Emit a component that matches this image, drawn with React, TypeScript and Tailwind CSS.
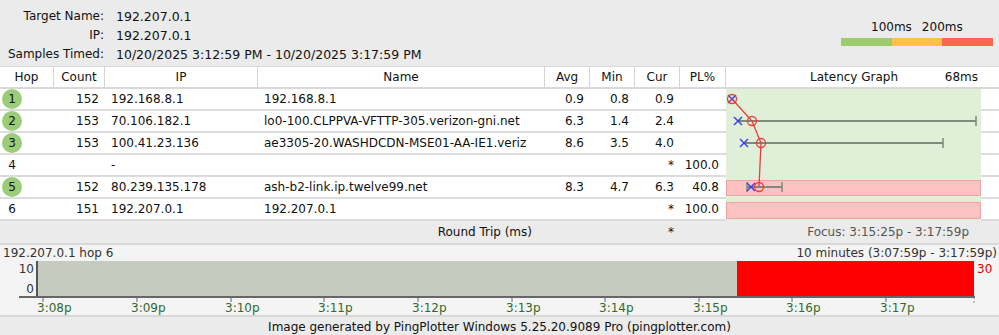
import React from 'react';

const font = { fontFamily: '"DejaVu Sans", Verdana, sans-serif' };

type Hop = {
  hop: number;
  ok: boolean;
  count: string;
  ip: string;
  name: string;
  avg: string;
  min: string;
  cur: string;
  pl: string;
};

const hops: Hop[] = [
  { hop: 1, ok: true, count: '152', ip: '192.168.8.1', name: '192.168.8.1', avg: '0.9', min: '0.8', cur: '0.9', pl: '' },
  { hop: 2, ok: true, count: '153', ip: '70.106.182.1', name: 'lo0-100.CLPPVA-VFTTP-305.verizon-gni.net', avg: '6.3', min: '1.4', cur: '2.4', pl: '' },
  { hop: 3, ok: true, count: '153', ip: '100.41.23.136', name: 'ae3305-20.WASHDCDN-MSE01-AA-IE1.veriz', avg: '8.6', min: '3.5', cur: '4.0', pl: '' },
  { hop: 4, ok: false, count: '', ip: '-', name: '', avg: '', min: '', cur: '*', pl: '100.0' },
  { hop: 5, ok: true, count: '152', ip: '80.239.135.178', name: 'ash-b2-link.ip.twelve99.net', avg: '8.3', min: '4.7', cur: '6.3', pl: '40.8' },
  { hop: 6, ok: false, count: '151', ip: '192.207.0.1', name: '192.207.0.1', avg: '', min: '', cur: '*', pl: '100.0' },
];

const ticks = [
  { x: 43, label: '3:08p' },
  { x: 137, label: '3:09p' },
  { x: 231, label: '3:10p' },
  { x: 324, label: '3:11p' },
  { x: 418, label: '3:12p' },
  { x: 512, label: '3:13p' },
  { x: 605, label: '3:14p' },
  { x: 699, label: '3:15p' },
  { x: 792, label: '3:16p' },
  { x: 886, label: '3:17p' },
];

function LatencyGraph() {
  const rows = [0, 1, 2, 3, 4, 5];
  return (
    <svg width="273" height="132" className="block">
      <rect x="0" y="0" width="255" height="132" fill="#e0efd7" />
      {rows.map((r) => (
        <rect key={r} x="255" y={r * 22 + 20} width="18" height="2" fill="#dcdcdc" />
      ))}
      <rect x="0.5" y="91.5" width="254" height="15" fill="#ffc2c2" stroke="#eea4a4" />
      <rect x="0.5" y="113.5" width="254" height="16" fill="#ffc2c2" stroke="#eea4a4" />

      {/* min..max bars */}
      <g stroke="#7d8a7a" strokeWidth="2">
        <line x1="12" y1="32" x2="250" y2="32" />
        <line x1="250" y1="27" x2="250" y2="37" strokeWidth="1.5" />
        <line x1="18" y1="54" x2="217" y2="54" />
        <line x1="217" y1="49" x2="217" y2="59" strokeWidth="1.5" />
        <line x1="21" y1="98" x2="56" y2="98" />
        <line x1="21" y1="93" x2="21" y2="103" strokeWidth="1.5" />
        <line x1="56" y1="93" x2="56" y2="103" strokeWidth="1.5" />
      </g>

      {/* min marks */}
      <g stroke="#3b3fe6" strokeWidth="1.5">
        {[
          [6, 10],
          [12, 32],
          [18, 54],
          [25, 98],
        ].map(([x, y]) => (
          <g key={`${x}-${y}`}>
            <line x1={x - 4} y1={y - 4} x2={x + 4} y2={y + 4} />
            <line x1={x - 4} y1={y + 4} x2={x + 4} y2={y - 4} />
          </g>
        ))}
      </g>

      {/* avg line */}
      <polyline points="6,10 26,32 35,54 33,98" fill="none" stroke="#ee3b3b" strokeWidth="1.3" />
      <g stroke="#ee3b3b" strokeWidth="1.3" fill="none">
        <circle cx="6" cy="10" r="4.5" />
        <circle cx="26" cy="32" r="4.5" />
        <circle cx="35" cy="54" r="4.5" />
        <circle cx="33" cy="98" r="4.5" />
      </g>
    </svg>
  );
}

function TimelineChart() {
  return (
    <svg width="999" height="54" className="block" style={font}>
      <rect x="38" y="0" width="699" height="36" fill="#c6cbc0" />
      <rect x="737" y="0" width="237" height="36" fill="#ff0000" />
      <line x1="37" y1="0" x2="37" y2="37" stroke="#555" strokeWidth="2" />
      <line x1="19" y1="36" x2="975" y2="36" stroke="#666" strokeWidth="2" />
      <text x="34" y="12" fontSize="12" textAnchor="end" fill="#333">10</text>
      <text x="34" y="32" fontSize="12" textAnchor="end" fill="#333">0</text>
      <text x="977" y="12" fontSize="12" fill="#dd0000">30</text>
      {ticks.map((t) => (
        <g key={t.label}>
          <line x1={t.x} y1="36" x2={t.x} y2="41" stroke="#666" strokeWidth="1" />
          <text x={t.x - 6} y="51" fontSize="12" fill="#2e6b2e">
            {t.label}
          </text>
        </g>
      ))}
      <line x1="974" y1="36" x2="974" y2="44" stroke="#888" strokeWidth="1" strokeDasharray="2 2" />
    </svg>
  );
}

export default function App() {
  return (
    <div className="w-[999px] h-[335px] overflow-hidden bg-white text-[12px] text-[#111]" style={font}>
      {/* target info */}
      <div className="flex h-[66px] justify-between bg-[#ebebeb]">
        <div className="pt-[7px] leading-[19px]">
          {[
            ['Target Name:', '192.207.0.1'],
            ['IP:', '192.207.0.1'],
            ['Samples Timed:', '10/20/2025 3:12:59 PM - 10/20/2025 3:17:59 PM'],
          ].map(([k, v]) => (
            <div key={k} className="flex">
              <div className="w-[104px] whitespace-nowrap text-right">{k}</div>
              <div className="pl-[12px] whitespace-nowrap text-[12.5px]">{v}</div>
            </div>
          ))}
        </div>
        <div className="pr-[6px] pt-[20px]">
          <div className="flex h-[14px] items-center gap-[10px] pl-[30px] leading-[14px]">
            <span>100ms</span>
            <span>200ms</span>
          </div>
          <div className="mt-[4px] flex h-[8px] w-[152px]">
            <div className="flex-1 bg-[#9ccc6c]" />
            <div className="flex-1 bg-[#ffbf52]" />
            <div className="flex-1 bg-[#ff6650]" />
          </div>
        </div>
      </div>

      {/* table header */}
      <div className="flex h-[23px] border-t border-b-2 border-[#d9d9d9] bg-white leading-[20px]">
        <div className="w-[54px] border-r border-[#d4d4d4] text-center">Hop</div>
        <div className="w-[51px] border-r border-[#d4d4d4] text-center">Count</div>
        <div className="w-[153px] border-r border-[#d4d4d4] text-center">IP</div>
        <div className="w-[287px] border-r border-[#d4d4d4] text-center">Name</div>
        <div className="w-[45px] border-r border-[#d4d4d4] text-center">Avg</div>
        <div className="w-[45px] border-r border-[#d4d4d4] text-center">Min</div>
        <div className="w-[45px] border-r border-[#d4d4d4] text-center">Cur</div>
        <div className="w-[46px] border-r border-[#d4d4d4] text-center">PL%</div>
        <div className="flex flex-1 justify-between pl-[84px] pr-[21px]">
          <span>Latency Graph</span>
          <span>68ms</span>
        </div>
      </div>

      {/* hop rows */}
      <div className="flex">
        <div className="w-[726px]">
          {hops.map((h) => (
            <div key={h.hop} className="flex h-[22px] items-center border-b-2 border-[#dcdcdc] leading-[20px]">
              <div className="flex w-[54px] pl-[2px]">
                {h.ok ? (
                  <span className="flex h-[20px] w-[20px] items-center justify-center rounded-full bg-[#9bcc78]">
                    {h.hop}
                  </span>
                ) : (
                  <span className="w-[20px] text-center">{h.hop}</span>
                )}
              </div>
              <div className="w-[51px] pr-[6px] text-right">{h.count}</div>
              <div className="w-[153px] pl-[6px]">{h.ip}</div>
              <div className="w-[287px] pl-[6px] pr-[6px]">
                <div className="overflow-hidden whitespace-nowrap">{h.name}</div>
              </div>
              <div className="w-[45px] pr-[6px] text-right">{h.avg}</div>
              <div className="w-[45px] pr-[6px] text-right">{h.min}</div>
              <div className="w-[45px] pr-[6px] text-right">{h.cur}</div>
              <div className="w-[46px] pr-[7px] text-right">{h.pl}</div>
            </div>
          ))}
        </div>
        <LatencyGraph />
      </div>

      {/* round trip */}
      <div className="flex h-[24px] items-center border-b-2 border-[#d9d9d9] bg-[#ebebeb] leading-[22px]">
        <div className="w-[545px] pr-[13px] text-right">Round Trip (ms)</div>
        <div className="w-[45px]" />
        <div className="w-[45px]" />
        <div className="w-[45px] pr-[6px] text-right">*</div>
        <div className="w-[46px]" />
        <div className="flex-1 pr-[30px] text-right text-[#555]">Focus: 3:15:25p - 3:17:59p</div>
      </div>

      {/* timeline */}
      <div className="h-[70px] bg-[#f4f4f4]">
        <div className="flex h-[16px] justify-between pl-[3px] pr-[2px] leading-[16px] text-[#333]">
          <span>192.207.0.1 hop 6</span>
          <span>10 minutes (3:07:59p - 3:17:59p)</span>
        </div>
        <TimelineChart />
      </div>

      {/* footer */}
      <div className="flex h-[22px] items-center justify-center border-t-2 border-[#d9d9d9] bg-[#ebebeb] leading-[20px]">
        Image generated by PingPlotter Windows 5.25.20.9089 Pro (pingplotter.com)
      </div>
    </div>
  );
}
